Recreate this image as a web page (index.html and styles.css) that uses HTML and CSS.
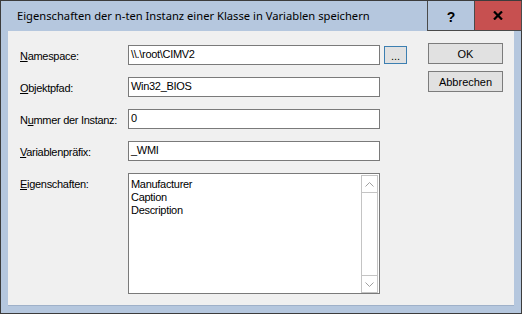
FILE: index.html
```html
<!DOCTYPE html>
<html lang="de">
  <head>
    <meta charset="UTF-8" />
    <title>Eigenschaften der n-ten Instanz</title>
    <link rel="stylesheet" href="styles.css">
  </head>
  <body>
    <div class="window">
      <!-- ========== TITLE BAR ========== -->
      <div class="titlebar">
        <span class="title">Eigenschaften der n-ten Instanz einer Klasse in Variablen speichern</span>
        <button class="tb-btn help">?</button>
        <button class="tb-btn close">
          <svg width="10" height="9" viewBox="0 0 10 9">
            <path d="M1 0.5 L9 8.5 M9 0.5 L1 8.5" stroke="#000" stroke-width="2.2" />
          </svg>
        </button>
      </div>

      <!-- ========== CLIENT ========== -->
      <div class="client">
        <div class="form">
          <label class="lbl"><u>N</u>amespace:</label>
          <div class="field">\\.\root\CIMV2</div>
          <button class="browse">...</button>

          <label class="lbl"><u>O</u>bjektpfad:</label>
          <div class="field">Win32_BIOS</div>
          <span></span>

          <label class="lbl">N<u>u</u>mmer der Instanz:</label>
          <div class="field">0</div>
          <span></span>

          <label class="lbl"><u>V</u>ariablenpräfix:</label>
          <div class="field">_WMI</div>
          <span></span>

          <label class="lbl"><u>E</u>igenschaften:</label>
          <div class="listbox">
            <div class="list-text">
              <div>Manufacturer</div>
              <div>Caption</div>
              <div>Description</div>
            </div>
            <div class="scrollbar">
              <div class="sb-btn">
                <svg width="9" height="5" viewBox="0 0 9 5"><path d="M0.5 4.5 L4.5 0.5 L8.5 4.5" fill="none" stroke="#a0a0a0" /></svg>
              </div>
              <div class="sb-track"></div>
              <div class="sb-btn">
                <svg width="9" height="5" viewBox="0 0 9 5"><path d="M0.5 0.5 L4.5 4.5 L8.5 0.5" fill="none" stroke="#a0a0a0" /></svg>
              </div>
            </div>
          </div>
          <span></span>
        </div>

        <div class="actions">
          <button class="btn">OK</button>
          <button class="btn">Abbrechen</button>
        </div>
      </div>
    </div>
  </body>
</html>
```

FILE: styles.css
```css
* {
  margin: 0;
  padding: 0;
  box-sizing: border-box;
}

body {
  background-color: #b5c7de;
  font-family: "Liberation Sans", Arial, sans-serif;
  font-size: 11px;
  letter-spacing: -0.3px;
  color: #000;
}

.window {
  width: 522px;
  height: 314px;
  border: 1px solid #3c3c3c;
  background-color: #b5c7de;
  display: flex;
  flex-direction: column;
}

/* ========== TITLE BAR ========== */
.titlebar {
  height: 30px;
  display: flex;
  align-items: stretch;
}

.title {
  flex: 1;
  padding-left: 16px;
  padding-top: 7px;
  font-family: "Noto Sans", sans-serif;
  font-size: 11.2px;
  letter-spacing: 0;
  color: #000;
}

.tb-btn {
  border: 1px solid #4a4a4a;
  border-top: none;
  background-color: #b5c7de;
  font-family: "Liberation Sans", Arial, sans-serif;
  font-weight: bold;
  font-size: 14px;
  display: flex;
  align-items: center;
  justify-content: center;
}

.help {
  width: 48px;
  padding-top: 2px;
}

.close {
  width: 47px;
  background-color: #c75050;
  border-left: none;
  margin-right: -1px;
}

/* ========== CLIENT ========== */
.client {
  flex: 1;
  margin: 0 7px 7px 7px;
  background-color: #f0f0f0;
  border-bottom: 1px solid #9fb1c9;
  display: flex;
  padding: 12px 0 0 12px;
}

.form {
  display: grid;
  grid-template-columns: 108px 252px 27px;
  grid-template-rows: 20px 20px 20px 20px 121px;
  row-gap: 12px;
  margin-top: 2px;
}

.lbl {
  padding-top: 5px;
}

.lbl u {
  text-decoration-thickness: 1px;
  text-underline-offset: 1px;
}

.field {
  background-color: #fff;
  border: 1px solid #7a7a7a;
  padding: 2px 2px 0 2px;
  white-space: pre;
}

.browse {
  width: 23px;
  height: 18px;
  margin: 1px 0 0 4px;
  background-color: #e1e1e1;
  border: 1px solid #3c7fb1;
  font-family: "Liberation Sans", Arial, sans-serif;
  font-size: 11px;
  line-height: 16px;
  padding-top: 1px;
}

.listbox {
  background-color: #fff;
  border: 1px solid #7a7a7a;
  display: flex;
  padding: 1px 1px 0 0;
}

.list-text {
  flex: 1;
  padding: 3px 2px;
  line-height: 13px;
}

.scrollbar {
  width: 17px;
  border: 1px solid #c4c4c4;
  display: flex;
  flex-direction: column;
}

.sb-btn {
  height: 16px;
  display: flex;
  align-items: center;
  justify-content: center;
}

.sb-track {
  flex: 1;
  border-top: 1px solid #c4c4c4;
  border-bottom: 1px solid #c4c4c4;
}

.actions {
  display: flex;
  flex-direction: column;
  gap: 7px;
  margin-left: 21px;
}

.btn {
  width: 75px;
  height: 21px;
  background-color: #e1e1e1;
  border: 1px solid #7c7c7c;
  font-family: "Liberation Sans", Arial, sans-serif;
  font-size: 11px;
}
```
